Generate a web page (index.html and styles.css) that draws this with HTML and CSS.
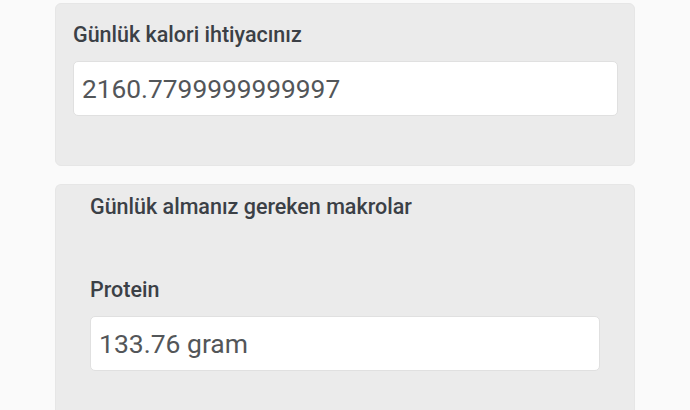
FILE: index.html
```html
<!DOCTYPE html>
<html lang="tr">
<head>
    <meta charset="UTF-8">
    <meta name="viewport" content="width=device-width, initial-scale=1.0">
    <title>Kalori Hesaplama</title>
    <link rel="stylesheet" href="styles.css">
</head>
<body>
    <div class="page">
        <div class="card calorie-card">
            <label class="label">Günlük kalori ihtiyacınız</label>
            <div class="field">2160.7799999999997</div>
        </div>

        <div class="card macro-card">
            <p class="label">Günlük almanız gereken makrolar</p>
            <label class="label protein-label">Protein</label>
            <div class="field field-large">133.76 gram</div>
        </div>
    </div>
</body>
</html>
```

FILE: styles.css
```css
body {
    font-family: Roboto, "Noto Sans", Arial, sans-serif;
    background-color: #fafafa;
    margin: 0;
    padding: 0;
    overflow: hidden;
}

.page {
    display: flex;
    flex-direction: column;
    gap: 18px;
    padding: 3px 0 0 55px;
}

.card {
    width: 580px;
    box-sizing: border-box;
    background-color: #ebebeb;
    border: 1px solid #e6e6e6;
    border-radius: 6px;
    display: flex;
    flex-direction: column;
}

.calorie-card {
    height: 163px;
    padding: 19px 16px 0 17px;
}

/* alt kart ekranın altına taşıyor */
.macro-card {
    height: 226px;
    padding: 10px 34px 0 34px;
    border-bottom: none;
    border-radius: 6px 6px 0 0;
}

.label {
    display: block;
    margin: 0;
    font-size: 21.5px;
    line-height: 24px;
    font-weight: 500;
    color: #3b4046;
}

.protein-label {
    margin-top: 59px;
}

.field {
    margin-top: 14px;
    height: 55px;
    box-sizing: border-box;
    background-color: #fff;
    border: 1px solid #e0e0e0;
    border-radius: 5px;
    padding: 0 8px;
    display: flex;
    align-items: center;
    font-size: 26.3px;
    color: #535659;
}

.field-large {
    font-size: 26.5px;
}
```
